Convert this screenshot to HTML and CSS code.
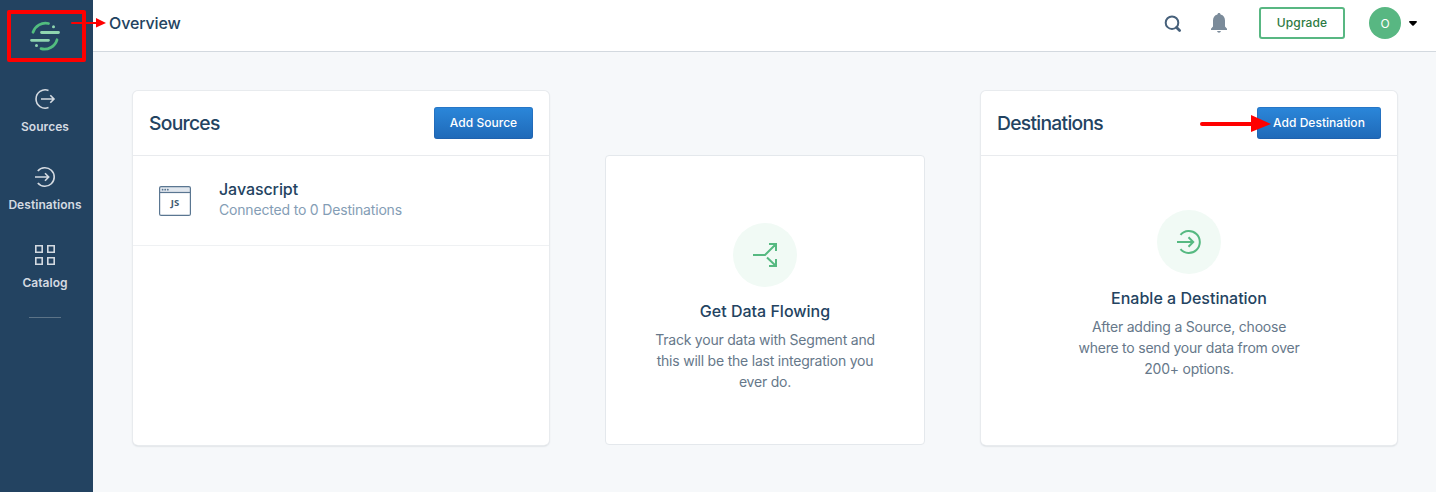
FILE: index.html
```html
<!DOCTYPE html>
<html lang="en">
<head>
<meta charset="utf-8">
<title>Overview</title>
<link rel="stylesheet" href="styles.css">
</head>
<body>
<div class="app">
  <nav class="sidebar">
    <a class="logo">
      <svg width="32" height="32" viewBox="0 0 32 32" fill="none" stroke-linecap="round" stroke-width="2.8">
        <path d="M4 12.2A13.2 13.2 0 0 1 19.500 3.500M12 28.7A13.2 13.2 0 0 0 28 19.8" stroke="#52bd7f"/>
        <path d="M12.500 12.5h17M2.500 20.3h17" stroke="#8fd5b0"/>
        <circle cx="24.5" cy="6.700" r="1.5" fill="#8fd5b0"/><circle cx="7.5" cy="25.5" r="1.5" fill="#8fd5b0"/>
      </svg>
    </a>
    <a class="nav-item">
      <svg width="24" height="24" viewBox="0 0 24 24" fill="none" stroke="#d4dae1" stroke-width="1.6">
        <path d="M15.500 3.400A9.2 9.2 0 1 0 15.500 20.600"/><path d="M8 12h13M17.300 8.200l3.700 3.8-3.700 3.800"/>
      </svg>
      <span class="nav-label">Sources</span>
    </a>
    <a class="nav-item">
      <svg width="24" height="24" viewBox="0 0 24 24" fill="none" stroke="#d4dae1" stroke-width="1.6">
        <path d="M4.8 6A9.3 9.3 0 1 1 4.8 18"/><path d="M2 12h13.5M12 8.2l3.7 3.8L12 15.8"/>
      </svg>
      <span class="nav-label">Destinations</span>
    </a>
    <a class="nav-item">
      <svg width="24" height="24" viewBox="0 0 24 24" fill="none" stroke="#d4dae1" stroke-width="1.6">
        <path d="M2.8 2.8h6.4v6.4H2.8zM14.8 2.8h6.4v6.4h-6.4zM2.8 14.8h6.4v6.4H2.8zM14.8 14.8h6.4v6.4h-6.4z"/>
      </svg>
      <span class="nav-label">Catalog</span>
    </a>
    <hr class="divider">
  </nav>
  <div class="page">
    <header class="topbar">
      <h1 class="page-title">Overview</h1>
      <div class="actions">
        <svg class="search" width="18" height="18" viewBox="0 0 18 18" fill="none" stroke="#47617b">
          <circle cx="8" cy="7.700" r="6.300" stroke-width="2"/><path d="M12.600 12.500l3 3" stroke-width="2.8" stroke-linecap="round"/>
        </svg>
        <svg class="bell" width="16" height="20" viewBox="0 0 16 20" fill="#7b8b9a">
          <path d="M8 0c-1 0-1.5.6-1.6 1.5C3.4 2.2 2 4.600 2 7.500v6L0 15.700V17h16v-1.300L14 13.500v-6C14 4.600 12.600 2.200 9.600 1.500 9.500.6 9 0 8 0zM6 18.100h4Q9.500 19.700 8 19.700T6 18.100z"/>
        </svg>
        <button class="upgrade">Upgrade</button>
        <span class="avatar">O</span>
        <svg class="caret" width="8" height="5" viewBox="0 0 8 5"><path d="M0 1Q0 0 1 0H7Q8 0 8 1L4.700 4.500Q4 5 3.300 4.500z"/></svg>
      </div>
    </header>
    <main class="content">
      <section class="card">
        <div class="card-head">
          <h2 class="card-title">Sources</h2>
          <button class="primary add-source">Add Source</button>
        </div>
        <div class="source-row">
          <svg width="32" height="30" viewBox="0 0 32 30">
            <rect x=".6" y=".6" width="30.800" height="28.800" rx="1.500" fill="#fff"/>
            <path d="M1 1h30v5.500H1z" fill="#e1e7ee"/>
            <path d="M1 6.500h30" stroke="#5a7691" stroke-width="1.200"/>
            <rect x=".6" y=".6" width="30.800" height="28.800" rx="1.500" fill="none" stroke="#5a7691" stroke-width="1.200"/>
            <g fill="#5a7691"><circle cx="3.600" cy="3.700" r=".9"/><circle cx="6.200" cy="3.700" r=".9"/><circle cx="8.800" cy="3.700" r=".9"/></g>
            <text class="js" x="16" y="20.300" text-anchor="middle">JS</text>
          </svg>
          <div class="source-text">
            <div class="source-name">Javascript</div>
            <div class="source-meta">Connected to 0 Destinations</div>
          </div>
        </div>
      </section>
      <section class="flow">
        <div class="disc">
          <svg width="32" height="32" viewBox="0 0 32 32" fill="none" stroke="#56b981" stroke-width="2">
            <path d="M4 16h12L27 5M20 5h7v7M18 18.500l9 8.500M20 27h7v-7"/>
          </svg>
        </div>
        <h3 class="info-title">Get Data Flowing</h3>
        <p class="info-text">Track your data with Segment and<br>this will be the last integration you<br>ever do.</p>
      </section>
      <section class="card">
        <div class="card-head">
          <h2 class="card-title">Destinations</h2>
          <button class="primary add-destination">Add Destination</button>
        </div>
        <div class="enable">
          <div class="disc">
            <svg width="32" height="32" viewBox="0 0 32 32" fill="none" stroke="#56b981" stroke-width="2">
              <path d="M7.500 8.800A11 11 0 1 1 7.500 23.200"/><path d="M4 16h16M15.500 11.300l4.700 4.700-4.700 4.700"/>
            </svg>
          </div>
          <h3 class="info-title">Enable a Destination</h3>
          <p class="info-text">After adding a Source, choose<br>where to send your data from over<br>200+ options.</p>
        </div>
      </section>
    </main>
  </div>
  <svg class="notes" width="1436" height="492" viewBox="0 0 1436 492" fill="none" stroke="red">
    <rect x="9" y="12" width="75" height="48" stroke-width="4" stroke-linejoin="round"/>
    <path d="M72 23h26" stroke-width="2" stroke-linecap="round"/><path d="M96 18l10 5-10 4.500z" fill="red" stroke="none"/>
    <path d="M1202 124h51" stroke-width="4" stroke-linecap="round"/><path d="M1251 115l20 9-20 8z" fill="red" stroke="none"/>
  </svg>
</div>
</body>
</html>
```
FILE: styles.css
```css
* { box-sizing: border-box; }
body { margin: 0; font-family: Inter, "Liberation Sans", sans-serif; background: #f6f8fa; color: #234361; }
h1, h2, h3, p { margin: 0; }
button { font-family: inherit; padding: 0; cursor: pointer; }
svg { display: block; flex: none; }
.app { position: relative; display: flex; width: 1436px; height: 492px; overflow: hidden; }
.sidebar { width: 93px; background: #234361; padding: 20px 3px 0 0; display: flex; flex-direction: column; align-items: center; flex: none; }
.logo { height: 67px; }
.nav-item { height: 78px; display: flex; flex-direction: column; align-items: center; }
.nav-label { margin-top: 8px; font-size: 12px; line-height: 16px; font-weight: 600; letter-spacing: .05px; color: #d4dae1; white-space: nowrap; }
.divider { width: 32px; height: 1px; margin: -4px 0 0; border: 0; background: #5c7387; }
.page { flex: 1; }
.topbar { height: 52px; background: #fff; border-bottom: 1px solid #d3d9df; display: flex; justify-content: space-between; padding: 0 19px 0 16px; }
.page-title { font-size: 16px; line-height: 46px; font-weight: 500; letter-spacing: -.12px; }
.actions { display: flex; align-items: center; height: 46px; }
.search { margin-top: 2px; }
.bell { margin-left: 29px; }
.upgrade { margin-left: 32px; width: 86px; height: 32px; border: 2px solid #58b782; border-radius: 3px; background: #fff; color: #2c7a42; font-size: 12px; font-weight: 500; letter-spacing: .1px; padding-bottom: 1px; }
.avatar { margin-left: 24px; width: 32px; height: 32px; border-radius: 50%; background: #58b782; color: #fff; font-size: 12px; line-height: 33px; text-align: center; }
.caret { margin-left: 8px; }
.content { padding: 39px 39px 0 40px; display: flex; gap: 56px; }
.card { width: 416px; height: 354px; background: #fff; border-radius: 5px; box-shadow: 0 0 0 1px #e8ebee, 0 1px 2px 0 #b9bfc5; }
.card-head { height: 65px; border-bottom: 1px solid #e9ebee; display: flex; align-items: center; justify-content: space-between; padding: 0 16px; }
.card-title { font-size: 19.3px; line-height: 28px; font-weight: 500; letter-spacing: -.72px; }
.primary { height: 32px; border: 0; border-radius: 3px; background: linear-gradient(#2b87da, #1f69b8); box-shadow: inset 0 0 0 1px rgba(30, 80, 150, .28); color: #fff; font-size: 12px; font-weight: 500; padding-bottom: 1px; letter-spacing: .03px; }
.add-source { width: 99px; }
.add-destination { width: 124px; }
.source-row { height: 90px; border-bottom: 1px solid #eff1f3; display: flex; align-items: center; padding: 0 26px; gap: 28px; }
.source-name { font-size: 16px; line-height: 21px; font-weight: 500; letter-spacing: -.08px; }
.source-meta { font-size: 14px; line-height: 20px; letter-spacing: -.18px; color: #849db5; margin-bottom: 3px; }
.js { font: 700 9.5px "Noto Sans", sans-serif; fill: #425a70; }
.flow { width: 320px; height: 290px; margin-top: 64px; border: 1px solid #e4e8ec; border-radius: 4px; background: #fff; padding-top: 67px; display: flex; flex-direction: column; align-items: center; }
.enable { padding-top: 54px; display: flex; flex-direction: column; align-items: center; }
.disc { width: 64px; height: 64px; border-radius: 50%; background: #f1faf5; display: flex; align-items: center; justify-content: center; }
.info-title { margin-top: 14px; font-size: 16px; line-height: 21px; font-weight: 500; }
.info-text { margin-top: 7px; font-size: 14px; line-height: 21px; letter-spacing: -.22px; color: #66788a; text-align: center; white-space: nowrap; }
.notes { position: absolute; inset: 0; pointer-events: none; }
```
